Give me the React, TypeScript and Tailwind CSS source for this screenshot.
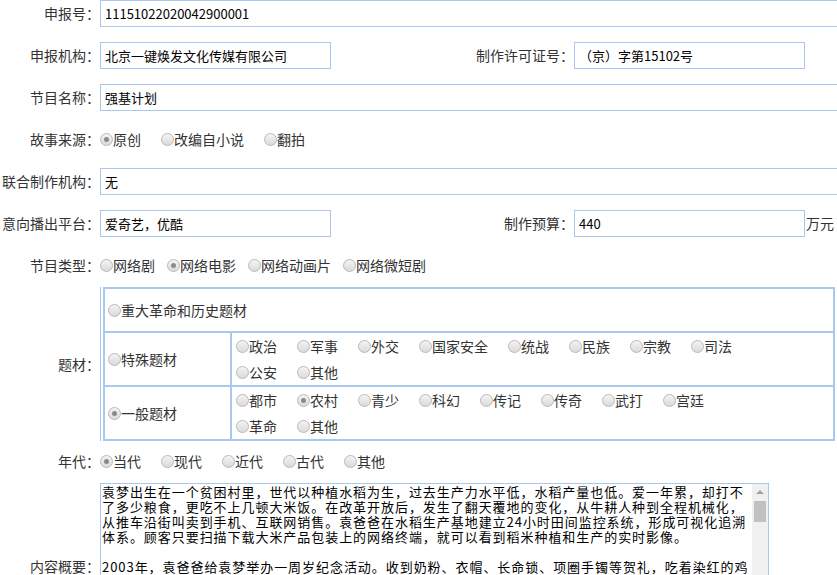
import React from "react";

const font = { fontFamily: '"Noto Sans CJK SC", "Microsoft YaHei", sans-serif' };

function Radio({ checked = false }: { checked?: boolean }) {
  return (
    <span className="flex h-[13px] w-[13px] shrink-0 items-center justify-center rounded-full border border-[#b9b9b9] bg-gradient-to-b from-[#f4f4f4] to-[#dadada]">
      {checked && <span className="h-[5px] w-[5px] rounded-full bg-[#8a8a8a]" />}
    </span>
  );
}

function Option({ text, checked, gap = "mr-[20px]" }: { text: string; checked?: boolean; gap?: string }) {
  return (
    <span className={`inline-flex items-center ${gap}`}>
      <Radio checked={checked} />
      <span>{text}</span>
    </span>
  );
}

function Label({ text, w = "w-[100px]" }: { text: string; w?: string }) {
  return <div className={`${w} shrink-0 text-right text-[14px] text-[#333]`}>{text}</div>;
}

function Field({ value, w = "w-[231px]" }: { value: string; w?: string }) {
  return (
    <div className={`${w} h-[27px] shrink-0 border border-[#a8c8f0] pl-[4px] text-[13px] leading-[25px] text-black`}>
      {value}
    </div>
  );
}

const summary = [
  "袁梦出生在一个贫困村里，世代以种植水稻为生，过去生产力水平低，水稻产量也低。爱一年累，却打不",
  "了多少粮食，更吃不上几顿大米饭。在改革开放后，发生了翻天覆地的变化，从牛耕人种到全程机械化，",
  "从推车沿街叫卖到手机、互联网销售。袁爸爸在水稻生产基地建立24小时田间监控系统，形成可视化追溯",
  "体系。顾客只要扫描下载大米产品包装上的网络终端，就可以看到稻米种植和生产的实时影像。",
  " ",
  "2003年，袁爸爸给袁梦举办一周岁纪念活动。收到奶粉、衣帽、长命锁、项圈手镯等贺礼，吃着染红的鸡",
];

export default function App() {
  const special1 = ["政治", "军事", "外交", "国家安全", "统战", "民族", "宗教", "司法"];
  const general1 = ["都市", "农村", "青少", "科幻", "传记", "传奇", "武打", "宫廷"];

  return (
    <div className="h-[575px] w-[837px] overflow-hidden bg-white text-[14px] text-[#333]" style={font}>
      {/* 申报号 */}
      <div className="mb-[15px] flex h-[27px] items-center">
        <Label text="申报号：" />
        <Field value="11151022020042900001" w="w-[760px]" />
      </div>

      {/* 申报机构 / 许可证 */}
      <div className="mb-[15px] flex h-[27px] items-center">
        <Label text="申报机构：" />
        <Field value="北京一键焕发文化传媒有限公司" />
        <Label text="制作许可证号：" w="w-[243px]" />
        <Field value="（京）字第15102号" />
      </div>

      <div className="mb-[15px] flex h-[27px] items-center">
        <Label text="节目名称：" />
        <Field value="强基计划" w="w-[760px]" />
      </div>

      <div className="mb-[15px] flex h-[27px] items-center">
        <Label text="故事来源：" />
        <Option text="原创" checked />
        <Option text="改编自小说" />
        <Option text="翻拍" />
      </div>

      <div className="mb-[15px] flex h-[27px] items-center">
        <Label text="联合制作机构：" />
        <Field value="无" w="w-[760px]" />
      </div>

      <div className="mb-[15px] flex h-[27px] items-center">
        <Label text="意向播出平台：" />
        <Field value="爱奇艺，优酷" />
        <Label text="制作预算：" w="w-[243px]" />
        <Field value="440" />
        <span className="pl-[1px]">万元</span>
      </div>

      <div className="flex h-[27px] items-center">
        <Label text="节目类型：" />
        <Option text="网络剧" gap="mr-[12px]" />
        <Option text="网络电影" checked gap="mr-[12px]" />
        <Option text="网络动画片" gap="mr-[12px]" />
        <Option text="网络微短剧" gap="mr-[12px]" />
      </div>

      {/* 题材 */}
      <div className="mt-[8px] flex items-center">
        <Label text="题材：" />
        <div className="border-l border-[#a8c8f0] pl-[2px]">
          <div className="grid w-[732px] grid-cols-[125px_1fr] gap-[2px] bg-[#a8c8f0] p-[2px]">
            <div className="col-span-2 flex h-[42px] items-center bg-white pl-[3px]">
              <Option text="重大革命和历史题材" />
            </div>
            <div className="flex h-[52px] items-center bg-white pl-[3px]">
              <Option text="特殊题材" />
            </div>
            <div className="h-[52px] bg-white pl-[4px]">
              <div className="flex h-[26px] items-center">
                {special1.map((t) => (
                  <Option key={t} text={t} />
                ))}
              </div>
              <div className="flex h-[26px] items-center">
                <Option text="公安" />
                <Option text="其他" />
              </div>
            </div>
            <div className="flex h-[52px] items-center bg-white pl-[3px]">
              <Option text="一般题材" checked />
            </div>
            <div className="h-[52px] bg-white pl-[4px]">
              <div className="flex h-[26px] items-center">
                {general1.map((t) => (
                  <Option key={t} text={t} checked={t === "农村"} />
                ))}
              </div>
              <div className="flex h-[26px] items-center">
                <Option text="革命" />
                <Option text="其他" />
              </div>
            </div>
          </div>
        </div>
      </div>

      <div className="mt-[7px] flex h-[27px] items-center">
        <Label text="年代：" />
        <Option text="当代" checked />
        <Option text="现代" />
        <Option text="近代" />
        <Option text="古代" />
        <Option text="其他" />
      </div>

      {/* 内容概要 */}
      <div className="mt-[8px] flex items-center">
        <Label text="内容概要：" />
        <div className="flex h-[166px] w-[669px] border border-[#a8c8f0]">
          <div className="flex-1 overflow-hidden pl-[1px] text-[13px] leading-[15px] tracking-[0.95px] text-black">
            {summary.map((line, i) => (
              <div key={i} className="whitespace-pre">
                {line}
              </div>
            ))}
          </div>
          <div className="flex w-[16px] flex-col items-center bg-[#f0f0f0]">
            <div className="mt-[6px] h-0 w-0 border-x-[4px] border-b-[4px] border-x-transparent border-b-[#a3a3a3]" />
            <div className="mt-[7px] h-[21px] w-[12px] bg-[#c1c1c1]" />
          </div>
        </div>
      </div>
    </div>
  );
}
